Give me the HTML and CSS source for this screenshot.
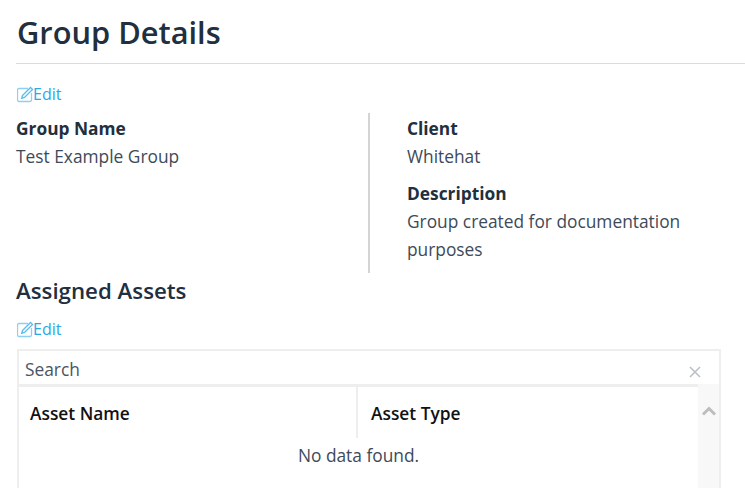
FILE: index.html
```html
<!DOCTYPE html>
<html lang="en">
  <head>
    <meta charset="UTF-8" />
    <title>Group Details</title>
    <link rel="stylesheet" href="styles.css">
  </head>
  <body>
    <div class="page">
      <h1>Group Details</h1>
      <a class="edit" href="#">
        <svg class="edit-icon" viewBox="0 0 17 17" width="17" height="17">
          <path d="M11 2.5H2a1.5 1.5 0 0 0-1.5 1.500V14A1.500 1.500 0 0 0 2 15.500h11a1.500 1.500 0 0 0 1.500-1.500V7" fill="none" stroke="#8ed0f2" stroke-width="1.3"/>
          <path d="M5.500 9.500 13.500 1.500l2 2-8 8-2.800.8z" fill="none" stroke="#5bbdec" stroke-width="1.400"/>
        </svg>Edit</a>
      <div class="details">
        <div class="col">
          <div class="label">Group Name</div>
          <div class="value">Test Example Group</div>
        </div>
        <div class="col col-right">
          <div class="label">Client</div>
          <div class="value">Whitehat</div>
          <div class="label label-next">Description</div>
          <div class="value">Group created for documentation purposes</div>
        </div>
      </div>
      <h2>Assigned Assets</h2>
      <a class="edit" href="#">
        <svg class="edit-icon" viewBox="0 0 17 17" width="17" height="17">
          <path d="M11 2.5H2a1.5 1.5 0 0 0-1.5 1.500V14A1.500 1.500 0 0 0 2 15.500h11a1.500 1.500 0 0 0 1.500-1.500V7" fill="none" stroke="#8ed0f2" stroke-width="1.3"/>
          <path d="M5.500 9.500 13.500 1.500l2 2-8 8-2.800.8z" fill="none" stroke="#5bbdec" stroke-width="1.400"/>
        </svg>Edit</a>
      <div class="grid">
        <div class="search">
          <span>Search</span>
          <svg class="clear" viewBox="0 0 12 12" width="12" height="12">
            <path d="M1 1l10 10M11 1 1 11" stroke="#bcc1c6" stroke-width="1.6" fill="none"/>
          </svg>
        </div>
        <div class="table">
          <div class="table-main">
            <div class="head">
              <div class="head-cell head-first">Asset Name</div>
              <div class="head-cell head-second">Asset Type</div>
            </div>
            <div class="empty">No data found.</div>
          </div>
          <div class="scrollbar">
            <svg viewBox="0 0 16 10" width="16" height="10">
              <path d="M2 8.5 8 2.5l6 6" stroke="#bdbdbd" stroke-width="3" fill="none"/>
            </svg>
          </div>
        </div>
      </div>
    </div>
  </body>
</html>
```

FILE: styles.css
```css
html,
body {
  height: 100%;
  overflow: hidden;
}
body {
  margin: 0;
  background: #fff;
  font-family: "Open Sans", "Noto Sans", sans-serif;
  color: #3d4a59;
  font-size: 17.33px;
}
.page {
  padding-left: 16px;
}
h1 {
  margin: 0;
  padding: 11px 0 9px 1px;
  height: 43px;
  border-bottom: 1px solid #dcdcdc;
  font-size: 30.8px;
  line-height: 43px;
  font-weight: 600;
  color: #212f3e;
}
h2 {
  margin: 0;
  padding: 3px 0 0 0;
  font-size: 22.27px;
  line-height: 30px;
  font-weight: 600;
  color: #212f3e;
}
.edit {
  display: flex;
  align-items: center;
  height: 20px;
  margin-top: 20px;
  padding-left: 1px;
  font-size: 16px;
  color: #29a9e6;
  text-decoration: none;
}
h2 + .edit {
  margin-top: 13px;
}
.edit-icon {
  flex: none;
  margin-right: -1px;
}
.details {
  display: flex;
  margin-top: 9px;
  height: 160px;
}
.col {
  width: 352px;
  flex: none;
  line-height: 28px;
  padding-top: 1px;
  box-sizing: border-box;
}
.col-right {
  width: 329px;
  padding-left: 37px;
  border-left: 2px solid #d4d4d4;
}
.label {
  font-weight: 700;
  color: #212f3e;
}
.label-next {
  margin-top: 9px;
}
.grid {
  display: flex;
  flex-direction: column;
  width: 700px;
  height: 138px;
  margin: 10px 0 0 1px;
  border: 2px solid #eeeeee;
  border-bottom: none;
}
.search {
  display: flex;
  align-items: center;
  justify-content: space-between;
  flex: none;
  box-sizing: border-box;
  height: 33px;
  padding: 2px 18px 0 6px;
  color: #4a5563;
}
.clear {
  margin-top: 6px;
}
.table {
  display: flex;
  flex: 1;
  min-height: 0;
}
.table-main {
  flex: 1;
  border-top: 3px solid #eeeeee;
}
.head {
  display: flex;
  height: 51px;
  color: #111;
  font-weight: 600;
}
.head-cell {
  padding: 14px 0 0 11px;
  line-height: 24px;
}
.head-first {
  width: 326px;
  height: 37px;
  border-right: 2px solid #eeeeee;
  flex: none;
}
.head-second {
  padding-left: 13px;
}
.empty {
  margin-top: 5px;
  text-align: center;
  color: #3d4a59;
  line-height: 24px;
}
.scrollbar {
  width: 21px;
  background: #f8f8f8;
  padding-top: 22px;
}
.scrollbar svg {
  display: block;
  margin: 0 auto;
}
```
